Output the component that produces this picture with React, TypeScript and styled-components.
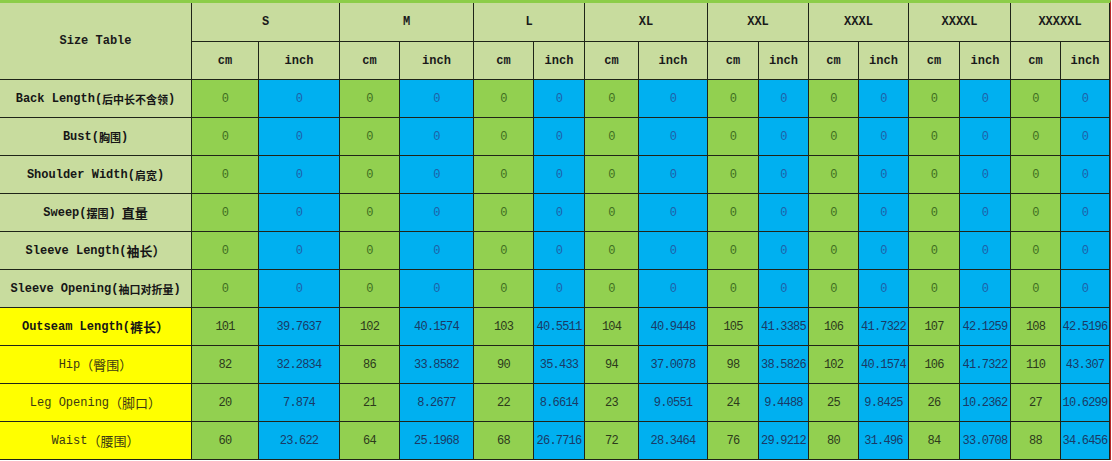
import React from "react";
import styled, { createGlobalStyle } from "styled-components";

const GlobalStyle = createGlobalStyle`
  html, body { margin: 0; padding: 0; background: #ffffff; }
  #root { width: 1112px; }
`;

const MONO = `"Liberation Mono", "DejaVu Sans Mono", "Noto Sans CJK SC", monospace`;
const CJK = `"Noto Sans CJK SC", "Noto Sans CJK TC", sans-serif`;

const HEADER_BG = "#c8dc9e";
const GREEN = "#92d050";
const BLUE = "#00b0f0";
const YELLOW = "#ffff00";

const Sheet = styled.div`
  width: 1110px;
  border-top: 3px solid #8ccd48;
  border-right: 1px solid #b82a2a;
`;

const Grid = styled.div`
  display: grid;
  grid-template-columns: 191px 66px 80px 59px 73px 59px 50px 53px 68px 50px 49px 49px 49px 50px 50px 49px 48px;
  grid-template-rows: 38px repeat(11, 37px);
  gap: 1px;
  background: #1f2418;
  border-bottom: 1px solid #1f2418;
`;

const Cell = styled.div<{ $bg: string; $color?: string; $bold?: boolean; $span?: number; $rows?: number }>`
  background: ${(p) => p.$bg};
  color: ${(p) => p.$color || "#1a1a1a"};
  font-family: ${MONO};
  font-size: 12px;
  letter-spacing: ${(p) => (p.$bold ? "0" : "-0.8px")};
  font-weight: ${(p) => (p.$bold ? 700 : 400)};
  display: flex;
  align-items: center;
  justify-content: center;
  white-space: nowrap;
  overflow: visible;
  grid-column: ${(p) => (p.$span ? `span ${p.$span}` : "auto")};
  grid-row: ${(p) => (p.$rows ? `span ${p.$rows}` : "auto")};
`;

const LabelCell = styled.div<{ $bg: string; $bold: boolean }>`
  background: ${(p) => p.$bg};
  color: ${(p) => (p.$bold ? "#161616" : "#3c3a12")};
  font-family: ${MONO};
  font-size: 12px;
  font-weight: ${(p) => (p.$bold ? 700 : 400)};
  display: flex;
  align-items: center;
  justify-content: center;
  white-space: nowrap;
`;

const Han = styled.span<{ $size: number; $gap?: number }>`
  font-family: ${CJK};
  font-size: ${(p) => p.$size}px;
  font-weight: inherit;
  margin-left: ${(p) => p.$gap || 0}px;
`;

type Row = {
  en: string;
  han: string;
  hanSize: number;
  tail?: string;
  full?: boolean;
  bold: boolean;
  yellow: boolean;
  values: (string | number)[];
};

const sizes = ["S", "M", "L", "XL", "XXL", "XXXL", "XXXXL", "XXXXXL"];
const zeros = Array(16).fill(0);

const rows: Row[] = [
  { en: "Back Length", han: "后中长不含领", hanSize: 11, bold: true, yellow: false, values: zeros },
  { en: "Bust", han: "胸围", hanSize: 11, bold: true, yellow: false, values: zeros },
  { en: "Shoulder Width", han: "肩宽", hanSize: 11, bold: true, yellow: false, values: zeros },
  { en: "Sweep", han: "摆围", hanSize: 11, tail: "直量", bold: true, yellow: false, values: zeros },
  { en: "Sleeve Length", han: "袖长", hanSize: 13, bold: true, yellow: false, values: zeros },
  { en: "Sleeve Opening", han: "袖口对折量", hanSize: 11, bold: true, yellow: false, values: zeros },
  {
    en: "Outseam Length", han: "裤长", hanSize: 13, bold: true, yellow: true,
    values: [101, "39.7637", 102, "40.1574", 103, "40.5511", 104, "40.9448", 105, "41.3385", 106, "41.7322", 107, "42.1259", 108, "42.5196"],
  },
  {
    en: "Hip", han: "臀围", hanSize: 13, full: true, bold: false, yellow: true,
    values: [82, "32.2834", 86, "33.8582", 90, "35.433", 94, "37.0078", 98, "38.5826", 102, "40.1574", 106, "41.7322", 110, "43.307"],
  },
  {
    en: "Leg Opening", han: "脚口", hanSize: 13, full: true, bold: false, yellow: true,
    values: [20, "7.874", 21, "8.2677", 22, "8.6614", 23, "9.0551", 24, "9.4488", 25, "9.8425", 26, "10.2362", 27, "10.6299"],
  },
  {
    en: "Waist", han: "腰围", hanSize: 13, full: true, bold: false, yellow: true,
    values: [60, "23.622", 64, "25.1968", 68, "26.7716", 72, "28.3464", 76, "29.9212", 80, "31.496", 84, "33.0708", 88, "34.6456"],
  },
];

function Label({ row }: { row: Row }) {
  return (
    <LabelCell $bg={row.yellow ? YELLOW : HEADER_BG} $bold={row.bold}>
      {row.en}
      {row.full ? (
        <Han $size={row.hanSize}>（{row.han}）</Han>
      ) : (
        <>
          (<Han $size={row.hanSize}>{row.han}</Han>
          {row.hanSize > 11 ? <Han $size={row.hanSize}>）</Han> : ")"}
        </>
      )}
      {row.tail ? <Han $size={13} $gap={6}>{row.tail}</Han> : null}
    </LabelCell>
  );
}

export default function App() {
  return (
    <>
      <GlobalStyle />
      <Sheet>
        <Grid>
          <Cell $bg={HEADER_BG} $bold $rows={2}>Size Table</Cell>
          {sizes.map((s) => (
            <Cell key={s} $bg={HEADER_BG} $bold $span={2}>{s}</Cell>
          ))}
          {sizes.map((s) => (
            <React.Fragment key={s + "u"}>
              <Cell $bg={HEADER_BG} $bold>cm</Cell>
              <Cell $bg={HEADER_BG} $bold>inch</Cell>
            </React.Fragment>
          ))}
          {rows.map((row) => (
            <React.Fragment key={row.en}>
              <Label row={row} />
              {row.values.map((v, i) => {
                const isCm = i % 2 === 0;
                const color = row.yellow
                  ? isCm ? "#2c3a1c" : "#1a3a66"
                  : isCm ? "#3f6e22" : "#1f60a8";
                return (
                  <Cell key={i} $bg={isCm ? GREEN : BLUE} $color={color}>
                    {v}
                  </Cell>
                );
              })}
            </React.Fragment>
          ))}
        </Grid>
      </Sheet>
    </>
  );
}
